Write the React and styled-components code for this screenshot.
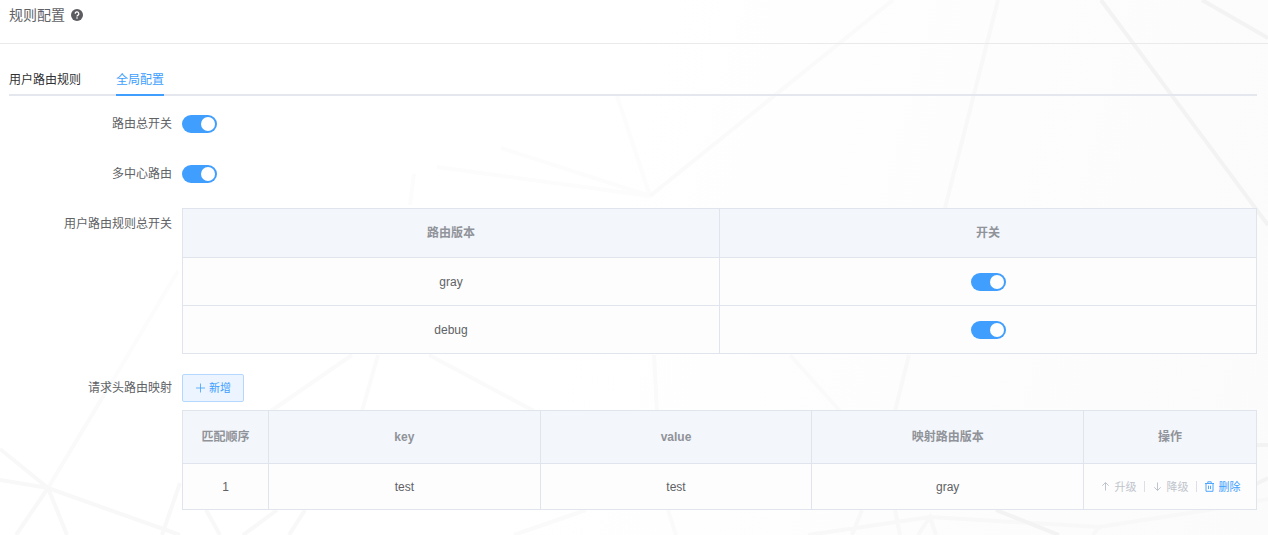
import React, { useState } from "react";
import styled, { createGlobalStyle } from "styled-components";

const GlobalStyle = createGlobalStyle`
  *, *::before, *::after { box-sizing: border-box; }
  body {
    margin: 0;
    background: #fdfdfd;
    color: #606266;
    font-family: "Liberation Sans", "Noto Sans CJK SC", sans-serif;
    font-size: 12px;
    line-height: 18px;
  }
`;

const Page = styled.div`
  position: relative;
  min-height: 100vh;
  overflow: hidden;
  isolation: isolate;
  background: linear-gradient(105deg, #ffffff 45%, #fbfbfb 100%);
`;

const Backdrop = styled.svg`
  position: absolute;
  inset: 0;
  width: 100%;
  height: 100%;
  z-index: -1;
  fill: none;
  stroke-width: 4;
`;

const Header = styled.header`
  display: flex;
  align-items: flex-start;
  gap: 6px;
  height: 44px;
  padding: 5px 9px;
  border-bottom: 1px solid #e8eaec;
`;

const Title = styled.h1`
  margin: 0;
  font-size: 14px;
  font-weight: 400;
  line-height: 20px;
`;

const HelpButton = styled.button`
  display: flex;
  align-items: center;
  height: 20px;
  padding: 0;
  border: 0;
  background: none;
  color: #5a5c60;
`;

const Content = styled.main`
  padding: 20px 11px 24px 9px;
`;

const Tabs = styled.div`
  display: flex;
  gap: 35px;
  height: 32px;
  border-bottom: 2px solid #e4e7ed;
`;

const Tab = styled.button`
  height: 32px;
  padding: 2px 0 0;
  border: 0;
  border-bottom: 2px solid ${(p) => (p.$active ? "#409eff" : "transparent")};
  background: none;
  color: ${(p) => (p.$active ? "#409eff" : "#303133")};
  font: inherit;
  cursor: pointer;
`;

const Form = styled.div`
  display: flex;
  flex-direction: column;
  gap: 18px;
  padding-top: 12px;
`;

const FormItem = styled.div`
  display: grid;
  grid-template-columns: 163px minmax(0, 1fr);
  column-gap: 10px;
`;

const Label = styled.label`
  line-height: 32px;
  text-align: right;
`;

const Field = styled.div`
  display: flex;
  flex-direction: column;
  align-items: flex-start;
  justify-content: center;
  gap: 8px;
  min-height: 32px;
`;

const Switch = styled.input.attrs({ type: "checkbox", role: "switch" })`
  appearance: none;
  display: inline-flex;
  align-items: center;
  width: 35px;
  height: 18px;
  margin: 0;
  padding: 2px;
  border-radius: 9px;
  background: #dcdfe6;
  vertical-align: middle;
  cursor: pointer;

  &::before {
    content: "";
    width: 14px;
    height: 14px;
    border-radius: 50%;
    background: #fff;
  }

  &:checked {
    justify-content: flex-end;
    background: #409eff;
  }
`;

const Table = styled.table`
  width: 100%;
  table-layout: fixed;
  border-collapse: collapse;
  background: #fdfdfd;
`;

const Col = styled.col`
  width: ${(p) => p.$width || "auto"};
`;

const Row = styled.tr`
  height: ${(p) => p.$height};
`;

const HeadCell = styled.th`
  padding: 0;
  border: 1px solid #dfe4ed;
  background: #f3f6fb;
  color: #909399;
  font-weight: 700;
`;

const Cell = styled.td`
  padding: 0;
  border: 1px solid #dfe4ed;
  text-align: center;
`;

const AddButton = styled.button`
  display: flex;
  align-items: center;
  gap: 2px;
  height: 28px;
  margin-top: 2px;
  padding: 0 12px;
  border: 1px solid #b3d8ff;
  border-radius: 2px;
  background: #ecf5ff;
  color: #409eff;
  font: inherit;
  font-size: 11px;
  cursor: pointer;
`;

const Actions = styled.div`
  display: flex;
  align-items: center;
  justify-content: center;
`;

const TextButton = styled.button`
  display: flex;
  align-items: center;
  gap: 4px;
  padding: 0;
  border: 0;
  background: none;
  color: #409eff;
  font: inherit;
  font-size: 11px;
  white-space: nowrap;
  cursor: pointer;

  &:disabled {
    color: #c0c4cc;
    cursor: not-allowed;
  }
`;

const Divider = styled.span`
  width: 1px;
  height: 11px;
  margin: 0 7px;
  background: #dcdfe6;
`;

const Glyph = styled.svg`
  flex: none;
  fill: none;
  stroke: currentColor;
  stroke-width: 1;
`;

const HelpIcon = () => (
  <Glyph width="12" height="12" viewBox="0 0 12 12" aria-hidden="true">
    <circle cx="6" cy="6" r="6" fill="currentColor" stroke="none" />
    <path d="M4.2 4.8a1.8 1.8 0 1 1 2.6 1.5c-.6.3-.8.5-.8 1.1" stroke="#fff" strokeWidth="1.3" />
    <circle cx="6" cy="9" r=".8" fill="#fff" stroke="none" />
  </Glyph>
);

const PlusIcon = () => (
  <Glyph width="12" height="12" viewBox="0 0 12 12" aria-hidden="true">
    <path d="M5.5 1.5v9M1 6h9" strokeWidth=".8" />
  </Glyph>
);

const UpIcon = () => (
  <Glyph width="11" height="11" viewBox="0 0 11 11" aria-hidden="true">
    <path d="M5.5 9.5v-8M2.3 4.7l3.2-3.2 3.2 3.2" />
  </Glyph>
);

const DownIcon = () => (
  <Glyph width="11" height="11" viewBox="0 0 11 11" aria-hidden="true">
    <path d="M5.5 1.5v8M2.3 6.3l3.2 3.2 3.2-3.2" />
  </Glyph>
);

const TrashIcon = () => (
  <Glyph width="11" height="11" viewBox="0 0 11 11" aria-hidden="true">
    <path d="M1 2.5h9M3.8 2.3V.8h3.4v1.5M2 2.7v7.6h7V2.7M4.5 4.7v3.4M6.5 4.7v3.4" strokeWidth=".9" />
  </Glyph>
);

const Network = () => (
  <Backdrop viewBox="0 0 1268 535" preserveAspectRatio="xMidYMid slice" aria-hidden="true">
    <path
      stroke="#fcfcfc"
      d="M617 96L650 196M501 148L650 196L437 167M414 174L410 205M178 271L113 380"
    />
    <path
      stroke="#fafafa"
      d="M893 0L650 196M113 380L48 488M352 355L271 411M378 355L362 411M429 355L534 411
        M654 355L657 411M790 355L840 411M668 510L676 535M586 510L514 535"
    />
    <path
      stroke="#f8f8f8"
      d="M998 0L945 208M909 355L895 411M48 488L16 535M0 449L48 488L67 535M0 480L48 488L180 535
        M180 483L162 535M206 510L220 535M277 510L243 535M305 510L289 535M862 510L852 535
        M895 510L900 535M918 535L930 517L936 535M808 535L930 517L1099 527L1208 510L1268 499
        M1099 527L1093 535"
    />
    <path
      stroke="#f3f3f3"
      d="M1101 0L1268 225M1202 0L1268 38M996 510L1059 535M1250 445H1268M1250 487L1268 478"
    />
  </Backdrop>
);

const routeVersions = ["gray", "debug"];
const mappings = [{ order: 1, key: "test", value: "test", version: "gray" }];

export default function App() {
  const [tab, setTab] = useState("全局配置");

  return (
    <Page>
      <GlobalStyle />
      <Network />
      <Header>
        <Title>规则配置</Title>
        <HelpButton type="button" aria-label="帮助">
          <HelpIcon />
        </HelpButton>
      </Header>
      <Content>
        <Tabs role="tablist">
          {["用户路由规则", "全局配置"].map((name) => (
            <Tab
              key={name}
              type="button"
              role="tab"
              aria-selected={tab === name}
              $active={tab === name}
              onClick={() => setTab(name)}
            >
              {name}
            </Tab>
          ))}
        </Tabs>
        <Form>
          <FormItem>
            <Label htmlFor="route-switch">路由总开关</Label>
            <Field>
              <Switch id="route-switch" defaultChecked />
            </Field>
          </FormItem>
          <FormItem>
            <Label htmlFor="center-switch">多中心路由</Label>
            <Field>
              <Switch id="center-switch" defaultChecked />
            </Field>
          </FormItem>
          <FormItem>
            <Label as="span" id="rules-label">用户路由规则总开关</Label>
            <Field>
              <Table aria-labelledby="rules-label">
                <thead>
                  <Row $height="49px">
                    <HeadCell>路由版本</HeadCell>
                    <HeadCell>开关</HeadCell>
                  </Row>
                </thead>
                <tbody>
                  {routeVersions.map((version) => (
                    <Row key={version} $height="48px">
                      <Cell>{version}</Cell>
                      <Cell>
                        <Switch aria-label={version} defaultChecked />
                      </Cell>
                    </Row>
                  ))}
                </tbody>
              </Table>
            </Field>
          </FormItem>
          <FormItem>
            <Label as="span" id="mapping-label">请求头路由映射</Label>
            <Field>
              <AddButton type="button">
                <PlusIcon />
                新增
              </AddButton>
              <Table aria-labelledby="mapping-label">
                <colgroup>
                  <Col $width="86px" />
                  <Col />
                  <Col />
                  <Col />
                  <Col $width="173px" />
                </colgroup>
                <thead>
                  <Row $height="53px">
                    <HeadCell>匹配顺序</HeadCell>
                    <HeadCell>key</HeadCell>
                    <HeadCell>value</HeadCell>
                    <HeadCell>映射路由版本</HeadCell>
                    <HeadCell>操作</HeadCell>
                  </Row>
                </thead>
                <tbody>
                  {mappings.map((item) => (
                    <Row key={item.order} $height="46px">
                      <Cell>{item.order}</Cell>
                      <Cell>{item.key}</Cell>
                      <Cell>{item.value}</Cell>
                      <Cell>{item.version}</Cell>
                      <Cell>
                        <Actions>
                          <TextButton type="button" disabled>
                            <UpIcon />
                            升级
                          </TextButton>
                          <Divider />
                          <TextButton type="button" disabled>
                            <DownIcon />
                            降级
                          </TextButton>
                          <Divider />
                          <TextButton type="button">
                            <TrashIcon />
                            删除
                          </TextButton>
                        </Actions>
                      </Cell>
                    </Row>
                  ))}
                </tbody>
              </Table>
            </Field>
          </FormItem>
        </Form>
      </Content>
    </Page>
  );
}
